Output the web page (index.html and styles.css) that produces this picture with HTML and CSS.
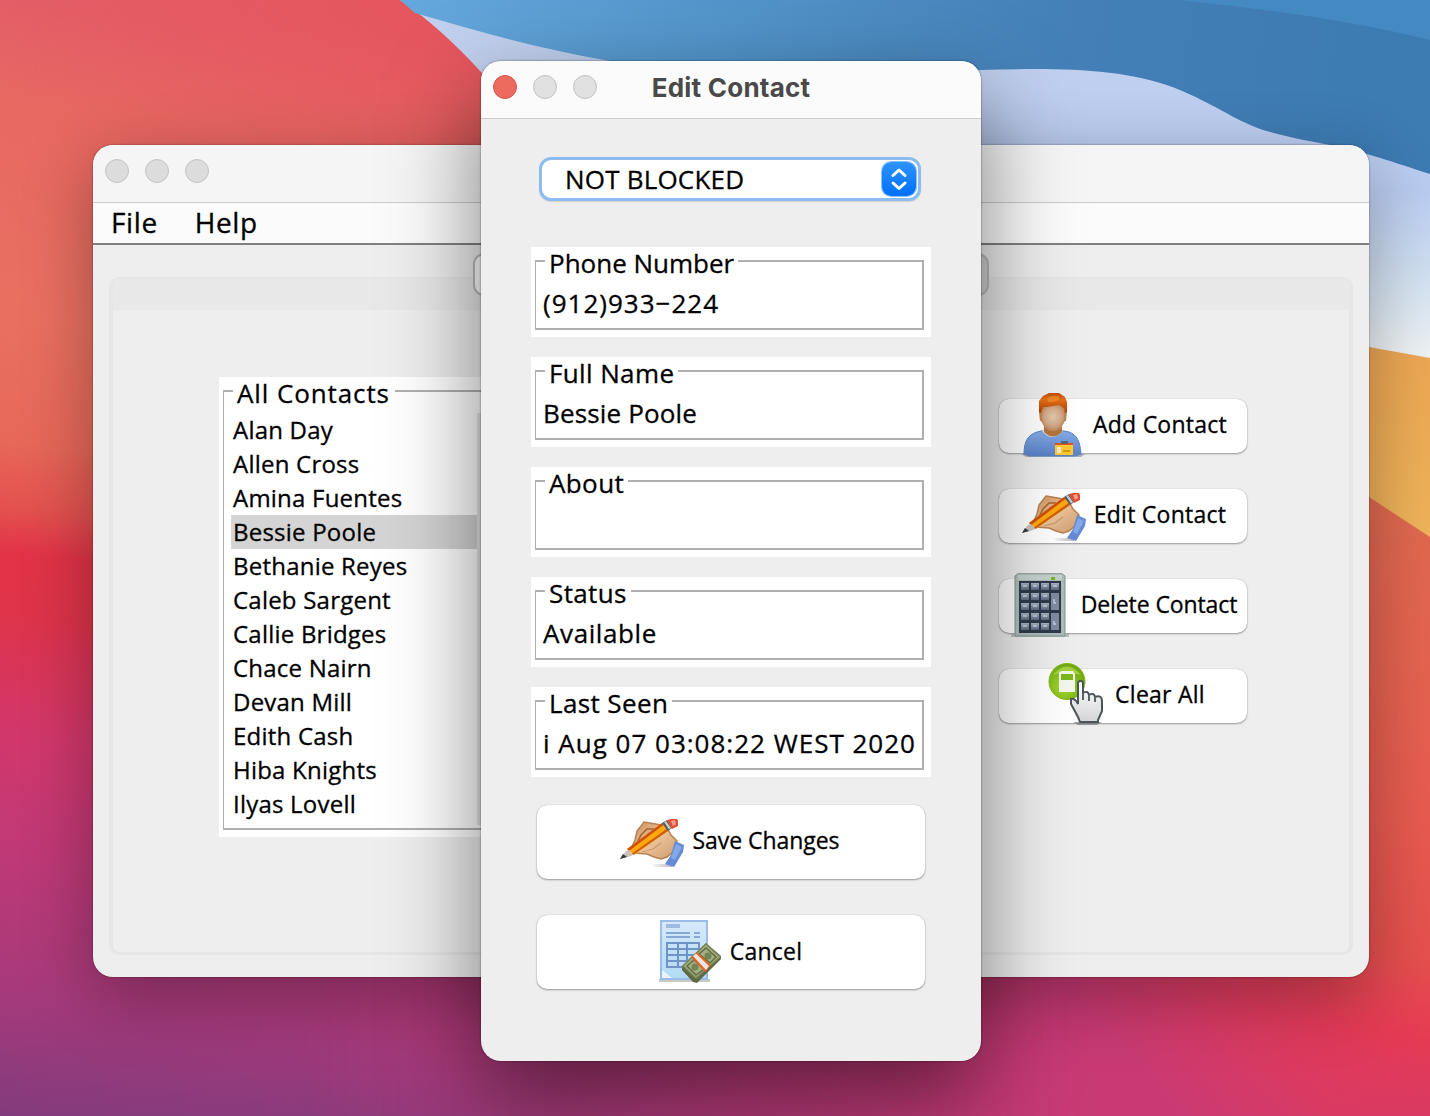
FILE: index.html
```html
<!DOCTYPE html>
<html lang="en">
<head>
<meta charset="utf-8">
<title>Edit Contact</title>
<link rel="stylesheet" href="styles.css">
</head>
<body>
<svg class="defs" width="0" height="0" aria-hidden="true">
  <defs>
    <linearGradient id="skin" x1="0" y1="0" x2="1" y2="1"><stop offset="0" stop-color="#c98d58"/><stop offset=".5" stop-color="#ebc39b"/><stop offset="1" stop-color="#cc9a6c"/></linearGradient>
    <linearGradient id="hair" x1="0" y1="0" x2="0" y2="1"><stop offset="0" stop-color="#c24e0c"/><stop offset=".35" stop-color="#e56f14"/><stop offset="1" stop-color="#b03c04"/></linearGradient>
    <radialGradient id="face" cx=".5" cy=".45" r=".6"><stop offset="0" stop-color="#e3c9b0"/><stop offset=".6" stop-color="#d2a987"/><stop offset="1" stop-color="#b67c4c"/></radialGradient>
    <linearGradient id="shirt" x1="0" y1="0" x2="0" y2="1"><stop offset="0" stop-color="#86aee8"/><stop offset="1" stop-color="#5a80c8"/></linearGradient>
    <linearGradient id="key" x1="0" y1="0" x2="0" y2="1"><stop offset="0" stop-color="#a9b4c4"/><stop offset="1" stop-color="#5a677e"/></linearGradient>
    <linearGradient id="paper" x1="0" y1="0" x2="0" y2="1"><stop offset="0" stop-color="#d6e9f8"/><stop offset="1" stop-color="#b0dbf5"/></linearGradient>
    <linearGradient id="glove" x1="0" y1="0" x2="0" y2="1"><stop offset="0" stop-color="#fff"/><stop offset="1" stop-color="#d3d6d7"/></linearGradient>
    <radialGradient id="lime" cx=".4" cy=".65" r=".65"><stop offset="0" stop-color="#a9dc2c"/><stop offset="1" stop-color="#6da815"/></radialGradient>
    <linearGradient id="ground"><stop offset="0" stop-color="#777" stop-opacity="0"/><stop offset="1" stop-color="#777" stop-opacity=".5"/></linearGradient>
    <symbol id="icon-hand" viewBox="0 0 64 64">
      <path d="M30 55H52V58H34Z" fill="url(#ground)"/>
      <path d="M24 13L30 14L46 17L51 26L57 32L54 42L47 48L41 50L34 48L27 45L14 44L11 40L15 31L17 22Z" fill="url(#skin)" stroke="#b98252" stroke-width="1.500"/>
      <path d="M17 34L21 26L27 20L34 20M26 29L29 24" fill="none" stroke="#a06531" stroke-width="1.500"/>
      <path d="M22 43L33 40L41 34" fill="none" stroke="#c99a70" stroke-width="1.200"/>
      <path d="M55 32L64 36L63 43L54 58L45 55L51 46Z" fill="#648bd5"/>
      <path d="M56 35L62 38L55 51L51 49Z" fill="#83a8e8"/>
      <path d="M7 40L42 14L48 22L14 46Z" fill="#ffa90f"/>
      <path d="M7 40L42 14L43.500 16L9 42Z" fill="#cf5010"/>
      <path d="M13 46L48 22L46.500 20L12 44.500Z" fill="#cf5f0d"/>
      <path d="M0 50L6 42L9 41L13 46L8 48Z" fill="#c9c2bb"/>
      <path d="M0 50L3 45L7 48Z" fill="#393735"/>
      <path d="M42 14L47 11L52 19L48 22Z" fill="#4b5960"/>
      <path d="M44 13L46 12L51 19L49 20.500Z" fill="#c5ced0"/>
      <path d="M47 11L51 10H57L58 12V17L52 20Z" fill="#e4502c"/>
      <path d="M51 12L55 11L56 15L53 17Z" fill="#fa9d90"/>
    </symbol>
  </defs>
</svg>

<div class="desktop">
  <svg class="wallpaper" viewBox="0 0 1430 1116" preserveAspectRatio="none" aria-hidden="true">
    <defs>
      <linearGradient id="wpBase" gradientUnits="userSpaceOnUse" x1="0" y1="0" x2="-110" y2="1116">
        <stop offset="0" stop-color="#e45e67"/><stop offset=".09" stop-color="#e86963"/><stop offset=".28" stop-color="#e97061"/><stop offset=".39" stop-color="#e76859"/><stop offset=".45" stop-color="#e4514f"/><stop offset=".49" stop-color="#e23347"/><stop offset=".54" stop-color="#df3349"/><stop offset=".65" stop-color="#d2376b"/><stop offset=".76" stop-color="#be3977"/><stop offset=".88" stop-color="#a63a7b"/><stop offset="1" stop-color="#7f3b7d"/>
      </linearGradient>
      <linearGradient id="wpTop" x1="0" y1="0" x2="1" y2="0"><stop offset="0" stop-color="#e5545c" stop-opacity="0"/><stop offset="1" stop-color="#e5545a"/></linearGradient>
      <linearGradient id="wpTopFade" x1="0" y1="0" x2="0" y2="1"><stop offset="0" stop-color="#fff"/><stop offset="1" stop-color="#000"/></linearGradient>
      <mask id="topMask"><rect width="500" height="240" fill="url(#wpTopFade)"/></mask>
      <linearGradient id="wpRight" gradientUnits="userSpaceOnUse" x1="1430" y1="480" x2="1330" y2="1150">
        <stop offset="0" stop-color="#df6b50"/><stop offset=".25" stop-color="#e5644f"/><stop offset=".5" stop-color="#e85b50"/><stop offset=".7" stop-color="#e6504e"/><stop offset=".82" stop-color="#e63a54"/><stop offset="1" stop-color="#c93a73"/>
      </linearGradient>
      <linearGradient id="wpLow" gradientUnits="userSpaceOnUse" x1="1380" y1="960" x2="1180" y2="1120"><stop offset="0" stop-color="#e63a54" stop-opacity="0"/><stop offset=".5" stop-color="#dc3a60" stop-opacity=".8"/><stop offset="1" stop-color="#c93a74"/></linearGradient>
      <linearGradient id="wpFade" gradientUnits="userSpaceOnUse" x1="300" y1="0" x2="1100" y2="0"><stop offset="0" stop-color="#000"/><stop offset="1" stop-color="#fff"/></linearGradient>
      <mask id="rightMask"><rect width="1430" height="1116" fill="url(#wpFade)"/></mask>
      <linearGradient id="wpBlue" gradientUnits="userSpaceOnUse" x1="400" y1="0" x2="1360" y2="130"><stop offset="0" stop-color="#65a8dd"/><stop offset=".35" stop-color="#5294ca"/><stop offset=".7" stop-color="#447fb7"/><stop offset="1" stop-color="#3d7bb3"/></linearGradient>
      <linearGradient id="wpPale" gradientUnits="userSpaceOnUse" x1="0" y1="60" x2="0" y2="350"><stop offset="0" stop-color="#c1d0ef"/><stop offset=".45" stop-color="#b9ccf1"/><stop offset=".75" stop-color="#d2e1f1"/><stop offset="1" stop-color="#edf2f5"/></linearGradient>
      <linearGradient id="wpOrange" x1="0" y1="0" x2="0" y2="1"><stop offset="0" stop-color="#eda352"/><stop offset="1" stop-color="#efb45b"/></linearGradient>
    </defs>
    <rect width="1430" height="1116" fill="url(#wpBase)"/>
    <rect width="500" height="240" fill="url(#wpTop)" mask="url(#topMask)"/>
    <g mask="url(#rightMask)">
      <path d="M500 480H1430V1116H300V700Z" fill="url(#wpRight)"/>
      <path d="M300 900H1430V1116H300Z" fill="url(#wpLow)"/>
    </g>
    <path d="M400 0H1430V360H760L520 116L481 72Q440 27 400 0Z" fill="url(#wpPale)"/>
    <path d="M400 0H1430V174C1390 161 1370 154 1340 147C1310 141 1290 138 1263 130C1230 118 1215 104 1175 88C1120 67 1050 68 981 70C850 75 760 72 610 61C535 48 480 32 415 13Z" fill="url(#wpBlue)"/>
    <path d="M1180 0H1430V40C1350 20 1270 10 1180 0Z" fill="#4589c2"/>
    <path d="M900 290C1060 300 1200 320 1369 347L1430 358V540H900Z" fill="url(#wpOrange)"/>
    <path d="M900 400C1100 400 1260 450 1369 497L1430 537V700H900Z" fill="url(#wpRight)"/>
  </svg>

  <main class="window window-main">
    <header class="titlebar titlebar-idle"><i class="light"></i><i class="light"></i><i class="light"></i></header>
    <nav class="menubar"><span>File</span><span>Help</span></nav>
    <div class="tab"></div>
    <section class="panel">
      <div class="panel-strip"></div>
      <div class="panel-body">
        <div class="list-box">
          <fieldset class="group group-list">
            <legend class="legend legend-list">All Contacts</legend>
            <ul class="contacts">
              <li>Alan Day</li><li>Allen Cross</li><li>Amina Fuentes</li><li class="selected">Bessie Poole</li><li>Bethanie Reyes</li><li>Caleb Sargent</li><li>Callie Bridges</li><li>Chace Nairn</li><li>Devan Mill</li><li>Edith Cash</li><li>Hiba Knights</li><li>Ilyas Lovell</li>
            </ul>
            <div class="scroll"></div>
          </fieldset>
        </div>
        <div class="actions">
          <button class="button">
            <svg class="icon" viewBox="0 0 64 64">
              <path d="M0 61H64L60 64H5Z" fill="#678" opacity=".5"/>
              <path d="M3 61C3 48 7 42 16 39L24 37H38L48 39C56 42 59 48 60 61L54 63H8Z" fill="url(#shirt)" stroke="#5c83c4"/>
              <path d="M21 38Q31 50 42 38L40 36H23Z" fill="#dce4ea"/>
              <path d="M23 32H41V39Q32 48 23 39Z" fill="#b8753d"/>
              <path d="M20 12H44V28L40 35L35 38H29L24 35L20 28Z" fill="url(#face)"/>
              <path d="M18 19H21V28H19ZM43 19H46L45 28H43Z" fill="#c08350"/>
              <path d="M18 19V8L22 3L28 0H38L44 4L46 9V19L44 20L43 15L38 12L32 13L26 14L22 14L20 20Z" fill="url(#hair)"/>
              <path d="M26 5L31 3H38V7L32 9H27Z" fill="#f9a336" opacity=".5"/>
              <path d="M34 50H52V62H34Z" fill="#ffc935"/><path d="M34 50H52V52H34Z" fill="#e6531b"/><path d="M40 48H47V51H40Z" fill="#566673"/><path d="M36 54H40V60H36Z" fill="#f4ead0"/><path d="M42 57H49V59H42Z" fill="#dc9917"/>
            </svg><span>Add Contact</span>
          </button>
          <button class="button">
            <svg class="icon"><use href="#icon-hand"/></svg><span>Edit Contact</span>
          </button>
          <button class="button button-delete">
            <svg class="icon" viewBox="0 0 64 64">
              <path d="M2 61H60V64H2Z" fill="#888" opacity=".45"/>
              <path d="M6 3L10 0H52L56 3V63H6Z" fill="#aebdba" stroke="#7f9391"/>
              <path d="M9 2H53V7H9Z" fill="#c6d2cf"/>
              <rect x="10" y="8" width="42" height="52" fill="#2f394b"/>
              <rect x="42" y="4" width="4" height="3" fill="#7ab51d"/>
              <g fill="url(#key)">
                <path d="M12 10h8v7h-8zM22 10h8v7h-8zM32 10h8v7h-8zM42 10h8v7h-8z"/>
                <path d="M12 20h8v7h-8zM22 20h8v7h-8zM32 20h8v7h-8z"/>
                <path d="M12 30h8v7h-8zM22 30h8v7h-8zM32 30h8v7h-8z"/>
                <path d="M12 40h8v7h-8zM22 40h8v7h-8zM32 40h8v7h-8z"/>
                <path d="M12 50h8v7h-8zM22 50h8v7h-8zM32 50h8v7h-8z"/>
              </g>
              <path d="M42 20h8v17h-8zM42 40h8v17h-8z" fill="#7e8ba1"/>
              <path d="M14 13h4M24 13h4M34 13h4M44 13h4M14 23h4M24 23h4M34 23h4M14 33h4M24 33h4M34 33h4M14 43h4M24 43h4M34 43h4M14 53h4M24 53h4M34 53h4M45 26v4h2M45 48v3h2" fill="none" stroke="#c5cddb" stroke-width="1.500"/>
            </svg><span>Delete Contact</span>
          </button>
          <button class="button">
            <svg class="icon" viewBox="0 0 64 64">
              <path d="M30 59H59L54 62H35Z" fill="#555" opacity=".5"/>
              <circle cx="24" cy="18.500" r="18" fill="url(#lime)" stroke="#83b91d"/>
              <path d="M10 12Q24 -5 38 12Q24 7 10 12Z" fill="#b5df4a" opacity=".7"/>
              <path d="M16 9L19 8H30L32 11V29H16Z" fill="#f4f8ec"/><path d="M18 11H30V17H18Z" fill="#7db81c"/>
              <path d="M35 39V20Q35 18 37.500 18Q40 18 40 20V30Q45 27 46 32Q51 29 52 34Q59 31 59 39V48L55 57V59H37L35 54L28 41V36Q32 35 35 41Z" fill="url(#glove)" stroke="#4c5558" stroke-width="2"/>
              <path d="M40 30V37M46 32V38M52 34V39" fill="none" stroke="#5b6467" stroke-width="2"/>
            </svg><span>Clear All</span>
          </button>
        </div>
      </div>
    </section>
  </main>

  <section class="window window-dialog">
    <header class="titlebar"><i class="light light-close"></i><i class="light"></i><i class="light"></i><h1>Edit Contact</h1></header>
    <div class="form">
      <div class="select"><span>NOT BLOCKED</span>
        <svg class="stepper" viewBox="0 0 34 34"><path d="M11 13.500L17 8L23 13.500M11 21L17 26.500L23 21" fill="none" stroke="#fff" stroke-width="3" stroke-linecap="round" stroke-linejoin="round"/></svg>
      </div>
      <div class="field"><fieldset class="group"><legend class="legend legend-phone">Phone Number</legend><p class="digits">(912)933−224</p></fieldset></div>
      <div class="field"><fieldset class="group"><legend class="legend">Full Name</legend><p class="name">Bessie Poole</p></fieldset></div>
      <div class="field"><fieldset class="group"><legend class="legend">About</legend><p></p></fieldset></div>
      <div class="field"><fieldset class="group"><legend class="legend">Status</legend><p>Available</p></fieldset></div>
      <div class="field"><fieldset class="group"><legend class="legend">Last Seen</legend><p class="digits">i Aug 07 03:08:22 WEST 2020</p></fieldset></div>
      <button class="button button-wide"><svg class="icon"><use href="#icon-hand"/></svg><span>Save Changes</span></button>
      <button class="button button-wide button-cancel">
        <svg class="icon" viewBox="0 0 64 64">
          <path d="M1 59H52V62H1Z" fill="#777" opacity=".4"/>
          <rect x="3" y="1" width="46" height="58" fill="url(#paper)" stroke="#9abce6" stroke-width="2"/>
          <path d="M4 50L14 58H4Z" fill="#eaf6fd"/>
          <path d="M8 4h14v4H8z" fill="#9dbbe0"/>
          <path d="M8 13H32M36 13H42M8 17H32M36 17H42" stroke="#86a8d5" stroke-width="2"/>
          <path d="M9 23H41V47H9ZM20 23V47M29 23V47M9 29H41M9 35H41M9 41H41" fill="none" stroke="#6f94c8" stroke-width="2"/>
          <path d="M48 23L63 36V39L39 63L35 62L24 50V46Z" fill="#5d6a43"/>
          <path d="M48 24L62 37L38 58L25 46Z" fill="#a6af82" stroke="#7c8958" stroke-width="1.500"/>
          <path d="M48 28L58 37L52 43L41 34ZM36 40L46 49L38 55L29 46Z" fill="none" stroke="#5f7044" stroke-width="1.500"/>
          <circle cx="50" cy="36" r="3.500" fill="#748456"/><circle cx="37" cy="47" r="3.500" fill="#748456"/>
          <path d="M33 37L39 32L53 45L47 52Z" fill="#e5612a"/><path d="M35 36L38 33.500L51 46L48 50Z" fill="#e9e5df"/>
        </svg><span>Cancel</span>
      </button>
    </div>
  </section>
</div>
</body>
</html>
```
FILE: styles.css
```css
* { box-sizing: border-box; }
html, body { margin: 0; height: 100%; overflow: hidden; }
body { font-family: "Open Sans", "Noto Sans", sans-serif; font-weight: 500; color: #000; -webkit-text-stroke: .3px #000; }
.defs { position: absolute; }
.desktop { position: relative; width: 1430px; height: 1116px; overflow: hidden; }
.wallpaper { display: block; width: 1430px; height: 1116px; }

/* Windows */
.window { position: absolute; display: flex; flex-direction: column; background: #eee; border-radius: 20px; }
.window-main { z-index: 1; left: 93px; top: 145px; width: 1276px; height: 832px; box-shadow: 0 0 2px rgba(0,0,0,.5), 0 20px 70px rgba(0,0,0,.33); }
.window-dialog { z-index: 2; left: 481px; top: 61px; width: 500px; height: 1000px; box-shadow: 0 0 2px rgba(0,0,0,.6), 0 36px 90px rgba(0,0,0,.5); }
.titlebar { position: relative; display: flex; flex: none; gap: 16px; height: 58px; padding: 14px 12px; background: #fbfbfb; border-bottom: 1px solid #cbcbcb; border-radius: 20px 20px 0 0; }
.titlebar-idle { background: #f5f5f5; }
.light { width: 24px; height: 24px; border-radius: 50%; background: #e1e1e1; border: 1px solid #c3c3c3; }
.titlebar-idle .light { background: #dcdcdc; }
.light-close { background: #ec6a5e; border-color: #d5564c; }
.titlebar h1 { position: absolute; left: 0; right: 0; top: 10px; margin: 0; text-align: center; font: 700 26px/34px Inter, sans-serif; letter-spacing: .24px; color: #494949; -webkit-text-stroke: 0; }

.menubar { display: flex; flex: none; gap: 37px; height: 42px; padding: 0 18px; background: #fbfbfb; border-bottom: 2px solid #808080; font-size: 28px; line-height: 38px; letter-spacing: .6px; }

/* Tabbed panel */
.tab { position: absolute; left: 380px; top: 108px; width: 516px; height: 43px; border: 2px solid #bcbcbc; border-radius: 11px; background: linear-gradient(90deg, #fff 50%, #d3d3d3 50%); z-index: 1; }
.panel { margin: 32px 16px 22px 16px; flex: 1; border: 2px solid #e6e6e6; border-width: 2px 4px 3px; border-radius: 10px; overflow: hidden; }
.panel-strip { height: 31px; background: #e8e8e8; }
.panel-body { display: flex; justify-content: space-between; padding: 67px 102px 0 106px; }
.list-box { width: 400px; height: 460px; padding: 4px 8px 7px 4px; background: #fff; }
.actions { display: grid; gap: 34px; align-content: start; padding-top: 22px; }

.group { height: 100%; min-width: 0; margin: 0; padding: 0 8px 0 7px; border: 2px solid #b0b0b0; border-left-width: 1px; }
.legend { padding: 3px 4px 0; margin-left: 2px; height: 20px; font-size: 26px; line-height: 18px; letter-spacing: .38px; white-space: nowrap; }
.legend-phone { letter-spacing: 0; }
.legend-list { letter-spacing: .9px; padding-right: 5px; }
.contacts { float: left; width: 246px; margin: 12px 0 0; padding: 0; list-style: none; font-size: 24px; line-height: 34px; letter-spacing: .22px; }
.contacts li { height: 34px; padding-left: 2px; }
.contacts .selected { background: #d4d4d4; }
.scroll { float: left; width: 14px; height: 412px; margin-top: 12px; background: #e7e7e7; }

.button { display: flex; align-items: center; justify-content: center; gap: 8px; width: 248px; height: 54px; margin: 0 0 2px; padding: 0 0 2px 2px; border: 0; border-radius: 10px; background: #fff; box-shadow: 0 1px 2px rgba(0,0,0,.35), 0 0 1px rgba(0,0,0,.3); font: inherit; font-size: 23px; letter-spacing: .25px; color: #000; }
.button-delete { padding-left: 0; letter-spacing: -.1px; }
.button span { margin-top: -2px; white-space: nowrap; }
.icon { display: block; flex: none; width: 64px; height: 64px; }

/* Dialog form */
.form { display: flex; flex-direction: column; align-items: center; padding-top: 38px; }
.select { display: flex; align-items: center; justify-content: space-between; width: 382px; height: 44px; margin: 0 2px 46px 0; padding: 0 3px 0 23px; background: #fff; border: 3px solid #8dbcf1; border-radius: 12px; box-shadow: 0 1px 1px rgba(0,0,0,.12); font-size: 26px; letter-spacing: .2px; }
.select span { margin-top: -1px; }
.stepper { width: 34px; height: 34px; margin-right: -1px; border-radius: 9px; background: linear-gradient(#2e93ff, #0070f8); box-shadow: 0 0 0 1px #8dc3fb; }
.field { width: 400px; height: 90px; margin-bottom: 20px; padding: 4px 7px 7px 4px; background: #fff; }
.field p { margin: 15px 0 0; height: 34px; font-size: 26px; line-height: 34px; letter-spacing: .6px; white-space: nowrap; }
.field .digits { letter-spacing: 1px; }
.field .name { letter-spacing: .15px; }
.button-wide { width: 388px; height: 74px; margin: 8px 0 28px; padding: 0 2px 2px 0; letter-spacing: -.05px; }
.button-cancel { padding-bottom: 0; letter-spacing: .2px; }
```
